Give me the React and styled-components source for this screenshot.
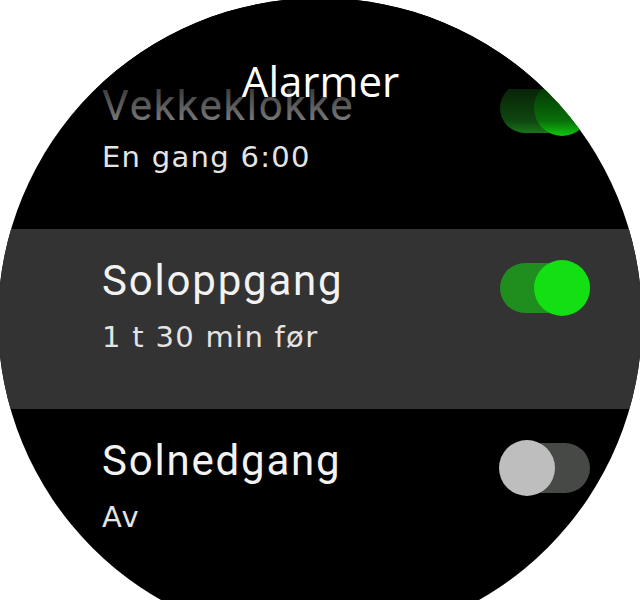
import React from "react";
import styled, { createGlobalStyle } from "styled-components";

const Global = createGlobalStyle`
  html, body { margin: 0; padding: 0; background: #ffffff; }
  #root { width: 640px; height: 600px; }
`;

const Screen = styled.div`
  width: 640px;
  height: 600px;
  overflow: hidden;
  background: #ffffff;
`;

const Watch = styled.div`
  position: relative;
  width: 644px;
  height: 644px;
  margin: -2px 0 0 -2px;
  border-radius: 50%;
  background: #000000;
  overflow: hidden;
`;

const List = styled.div`
  display: flex;
  flex-direction: column;
  padding-top: 51px;
`;

const Row = styled.div`
  display: flex;
  align-items: flex-start;
  height: 180px;
  box-sizing: border-box;
  padding: 28px 52px 0 104px;
  background: ${(p) => (p.$selected ? "#333333" : "transparent")};
`;

const Texts = styled.div`
  flex: 1;
  display: flex;
  flex-direction: column;
`;

const Title = styled.div`
  font-family: Roboto, "DejaVu Sans", sans-serif;
  font-size: 42px;
  line-height: 48px;
  letter-spacing: 1.8px;
  color: #f2f2f2;
  margin-top: ${(p) => p.$shift || 0}px;
`;

const Sub = styled.div`
  font-family: "DejaVu Sans", sans-serif;
  font-size: 29px;
  line-height: 36px;
  letter-spacing: 1.3px;
  color: #e4e4e4;
  margin-top: ${(p) => 14 - (p.$shift || 0)}px;
`;

const Toggle = styled.div`
  position: relative;
  flex: none;
  width: 90px;
  height: 56px;
  margin-top: 3px;
`;

const Track = styled.div`
  position: absolute;
  left: 0;
  right: 0;
  top: 3px;
  bottom: 3px;
  border-radius: 25px;
  background: ${(p) => (p.$on ? "#1f8e1f" : "#464946")};
`;

const Knob = styled.div`
  position: absolute;
  top: 0;
  left: ${(p) => (p.$on ? "34px" : "-1px")};
  width: 56px;
  height: 56px;
  border-radius: 50%;
  background: ${(p) => (p.$on ? "#12e012" : "#bebebe")};
`;

const Header = styled.div`
  position: absolute;
  left: 0;
  right: 0;
  top: 0;
  height: 142px;
  box-sizing: border-box;
  padding-top: 54px;
  display: flex;
  justify-content: center;
  background: linear-gradient(
    to bottom,
    #000000 0px,
    #000000 91px,
    rgba(0, 0, 0, 0.75) 91px,
    rgba(0, 0, 0, 0.5) 123px,
    rgba(0, 0, 0, 0) 142px
  );
`;

const HeaderTitle = styled.div`
  font-family: "Open Sans", "DejaVu Sans", sans-serif;
  font-size: 42px;
  line-height: 57px;
  color: #ffffff;
  padding-left: 1px;
`;

const alarms = [
  { title: "Vekkeklokke", sub: "En gang 6:00", on: true, shift: 5 },
  { title: "Soloppgang", sub: "1 t 30 min før", on: true, selected: true },
  { title: "Solnedgang", sub: "Av", on: false },
];

export default function App() {
  return (
    <Screen>
      <Global />
      <Watch>
        <List>
          {alarms.map((a) => (
            <Row key={a.title} $selected={a.selected}>
              <Texts>
                <Title $shift={a.shift}>{a.title}</Title>
                <Sub $shift={a.shift}>{a.sub}</Sub>
              </Texts>
              <Toggle>
                <Track $on={a.on} />
                <Knob $on={a.on} />
              </Toggle>
            </Row>
          ))}
        </List>
        <Header>
          <HeaderTitle>Alarmer</HeaderTitle>
        </Header>
      </Watch>
    </Screen>
  );
}
